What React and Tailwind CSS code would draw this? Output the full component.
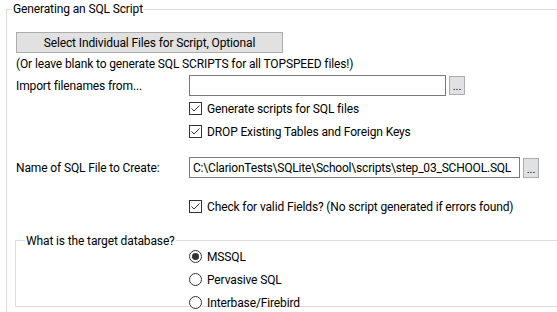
import React from "react";

function Check({ label }) {
  return (
    <div className="flex h-[17px] items-center ml-[182px]">
      <svg width="13" height="13" viewBox="0 0 13 13" className="shrink-0">
        <rect x="0.5" y="0.5" width="12" height="12" fill="#fff" stroke="#333" />
        <path d="M2.5 6.5 L5 9 L10.5 3.5" fill="none" stroke="#333" strokeWidth="1" />
      </svg>
      <span className="ml-[5px] leading-[16px] whitespace-nowrap">{label}</span>
    </div>
  );
}

function Radio({ label, checked }) {
  return (
    <div className="flex h-[17px] items-center ml-[173px] shrink-0">
      <svg width="13" height="13" viewBox="0 0 13 13" className="shrink-0">
        <circle cx="6.5" cy="6.5" r="6" fill="#fff" stroke="#333" />
        {checked && <circle cx="6.5" cy="6.5" r="3.5" fill="#333" />}
      </svg>
      <span className="ml-[5px] leading-[16px] whitespace-nowrap">{label}</span>
    </div>
  );
}

function Dots({ h }) {
  return (
    <div
      className={`ml-[3px] w-[16px] ${h} bg-[#e1e1e1] border border-[#adadad] flex items-end justify-center text-[11px] leading-[14px] shrink-0`}
    >
      ...
    </div>
  );
}

export default function App() {
  return (
    <div className="w-[557px] h-[312px] bg-white overflow-hidden text-[12px] tracking-[-0.13px] text-black font-['Roboto',sans-serif]">
      <div className="ml-[6px] mt-[9px] w-[600px] h-[303px] border-l border-t border-[#dcdcdc] flex flex-col">
        <div className="-mt-[9px] ml-[5px] px-[1px] bg-white w-fit leading-[16px] whitespace-nowrap">
          Generating an SQL Script
        </div>

        <div className="mt-[15px] ml-[9px] w-[267px] h-[21px] bg-[#e1e1e1] border border-[#adadad] flex items-center justify-center leading-[16px]">
          Select Individual Files for Script, Optional
        </div>

        <div className="mt-[3px] ml-[9px] leading-[16px] whitespace-nowrap">
          (Or leave blank to generate SQL SCRIPTS for all TOPSPEED files!)
        </div>

        <div className="mt-[3px] ml-[9px] flex items-center h-[21px]">
          <div className="w-[173px] leading-[16px] whitespace-nowrap">Import filenames from...</div>
          <div className="w-[257px] h-[21px] border border-[#7a7a7a] bg-white shrink-0" />
          <Dots h="h-[19px]" />
        </div>

        <div className="mt-[4px]">
          <Check label="Generate scripts for SQL files" />
        </div>
        <div className="mt-[6px]">
          <Check label="DROP Existing Tables and Foreign Keys" />
        </div>

        <div className="mt-[17px] ml-[9px] flex items-center h-[21px]">
          <div className="w-[173px] leading-[16px] whitespace-nowrap">Name of SQL File to Create:</div>
          <div className="w-[331px] h-[21px] border border-[#7a7a7a] bg-white shrink-0 flex items-center pl-[3px] leading-[16px] whitespace-nowrap overflow-hidden tracking-[-0.2px]">
            {"C:\\ClarionTests\\SQLite\\School\\scripts\\step_03_SCHOOL.SQL"}
          </div>
          <Dots h="h-[20px]" />
        </div>

        <div className="mt-[20px]">
          <Check label="Check for valid Fields? (No script generated if errors found)" />
        </div>

        <div className="mt-[25px] ml-[8px] w-[600px] h-[67px] border-l border-t border-b border-[#dcdcdc] flex flex-col">
          <div className="-mt-[8px] mb-[-1px] ml-[9px] px-[1px] bg-white w-fit leading-[16px] whitespace-nowrap">
            What is the target database?
          </div>
          <div className="h-[57px] flex flex-col gap-[6px]">
            <Radio label="MSSQL" checked />
            <Radio label="Pervasive SQL" />
            <Radio label="Interbase/Firebird" />
          </div>
        </div>
      </div>
    </div>
  );
}
